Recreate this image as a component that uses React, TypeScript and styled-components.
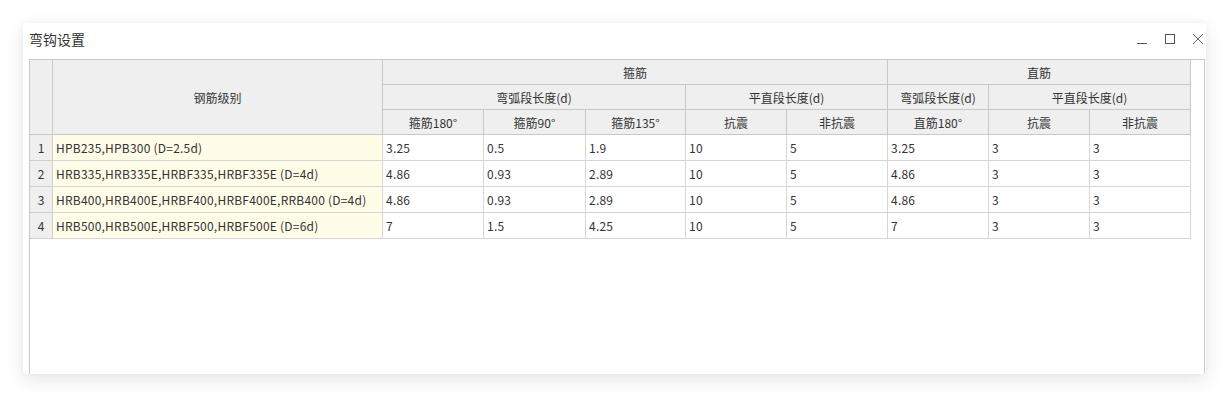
import React from "react";
import styled, { createGlobalStyle } from "styled-components";

const GlobalStyle = createGlobalStyle`
  body {
    margin: 0;
    background: #ffffff;
    font-family: "Noto Sans CJK SC", "Noto Sans", sans-serif;
  }
`;

const Page = styled.div`
  padding: 23px 0 0 23px;
  width: 1230px;
  height: 397px;
  box-sizing: border-box;
`;

const Dialog = styled.div`
  width: 1183px;
  height: 351px;
  background: #fff;
  border-radius: 4px;
  box-shadow: 0 6px 20px rgba(0, 0, 0, 0.1), 0 0 6px rgba(0, 0, 0, 0.04);
  display: flex;
  flex-direction: column;
  overflow: hidden;
`;

const TitleBar = styled.div`
  height: 36px;
  flex-shrink: 0;
  display: flex;
  align-items: center;
  justify-content: space-between;
  padding: 0 3px 4px 6px;
  box-sizing: border-box;
`;

const Title = styled.div`
  font-size: 14px;
  color: #333;
  line-height: 16px;
`;

const Controls = styled.div`
  display: flex;
  gap: 18px;
  align-items: center;
`;

const CtrlButton = styled.button`
  width: 10px;
  height: 10px;
  padding: 0;
  border: none;
  background: none;
  display: flex;
  svg {
    display: block;
  }
`;

const GridBox = styled.div`
  flex: 1;
  margin: 0 1px 0 6px;
  border: 1px solid #c8c8c8;
  border-bottom: none;
`;

const Grid = styled.div`
  display: grid;
  grid-template-columns: 23px 330px 101px 102px 100px 101px 101px 101px 101px 101px;
  grid-template-rows: 25px 25px 25px repeat(4, 26px);
`;

const HeadCell = styled.div<{ $col: string; $row: string }>`
  grid-column: ${(p) => p.$col};
  grid-row: ${(p) => p.$row};
  background: #efefef;
  border-right: 1px solid #c8c8c8;
  border-bottom: 1px solid #c8c8c8;
  display: flex;
  align-items: center;
  justify-content: center;
  font-size: 12px;
  color: #333;
`;

const NumCell = styled.div`
  background: #efefef;
  border-right: 1px solid #cfcfcf;
  border-bottom: 1px solid #cfcfcf;
  display: flex;
  align-items: center;
  justify-content: center;
  font-size: 12px;
  color: #333;
`;

const Cell = styled.div<{ $name?: boolean }>`
  background: ${(p) => (p.$name ? "#fffce8" : "#fff")};
  border-right: 1px solid #d6d6d6;
  border-bottom: 1px solid #d6d6d6;
  display: flex;
  align-items: center;
  padding-left: 3px;
  font-size: 12px;
  letter-spacing: 0.22px;
  color: #333;
  white-space: nowrap;
  overflow: hidden;
`;

const rows = [
  ["HPB235,HPB300 (D=2.5d)", "3.25", "0.5", "1.9", "10", "5", "3.25", "3", "3"],
  ["HRB335,HRB335E,HRBF335,HRBF335E (D=4d)", "4.86", "0.93", "2.89", "10", "5", "4.86", "3", "3"],
  ["HRB400,HRB400E,HRBF400,HRBF400E,RRB400 (D=4d)", "4.86", "0.93", "2.89", "10", "5", "4.86", "3", "3"],
  ["HRB500,HRB500E,HRBF500,HRBF500E (D=6d)", "7", "1.5", "4.25", "10", "5", "7", "3", "3"],
];

const headers: [string, string, string][] = [
  ["", "1", "1 / 4"],
  ["钢筋级别", "2", "1 / 4"],
  ["箍筋", "3 / 8", "1"],
  ["直筋", "8 / 11", "1"],
  ["弯弧段长度(d)", "3 / 6", "2"],
  ["平直段长度(d)", "6 / 8", "2"],
  ["弯弧段长度(d)", "8", "2"],
  ["平直段长度(d)", "9 / 11", "2"],
  ["箍筋180°", "3", "3"],
  ["箍筋90°", "4", "3"],
  ["箍筋135°", "5", "3"],
  ["抗震", "6", "3"],
  ["非抗震", "7", "3"],
  ["直筋180°", "8", "3"],
  ["抗震", "9", "3"],
  ["非抗震", "10", "3"],
];

const App = () => {
  return (
    <Page>
      <GlobalStyle />
      <Dialog>
        <TitleBar>
          <Title>弯钩设置</Title>
          <Controls>
            <CtrlButton>
              <svg width="10" height="10" viewBox="0 0 10 10">
                <line x1="0" y1="9.5" x2="10" y2="9.5" stroke="#555" strokeWidth="1" />
              </svg>
            </CtrlButton>
            <CtrlButton>
              <svg width="10" height="10" viewBox="0 0 10 10">
                <rect x="0.5" y="0.5" width="9" height="9" fill="none" stroke="#555" strokeWidth="1" />
              </svg>
            </CtrlButton>
            <CtrlButton>
              <svg width="10" height="10" viewBox="0 0 10 10">
                <path d="M0 0L10 10M10 0L0 10" stroke="#666" strokeWidth="1" />
              </svg>
            </CtrlButton>
          </Controls>
        </TitleBar>
        <GridBox>
          <Grid>
            {headers.map(([label, col, row], i) => (
              <HeadCell key={i} $col={col} $row={row}>
                {label}
              </HeadCell>
            ))}
            {rows.map((r, i) => (
              <React.Fragment key={i}>
                <NumCell>{i + 1}</NumCell>
                {r.map((v, j) => (
                  <Cell key={j} $name={j === 0}>
                    {v}
                  </Cell>
                ))}
              </React.Fragment>
            ))}
          </Grid>
        </GridBox>
      </Dialog>
    </Page>
  );
};

export default App;
